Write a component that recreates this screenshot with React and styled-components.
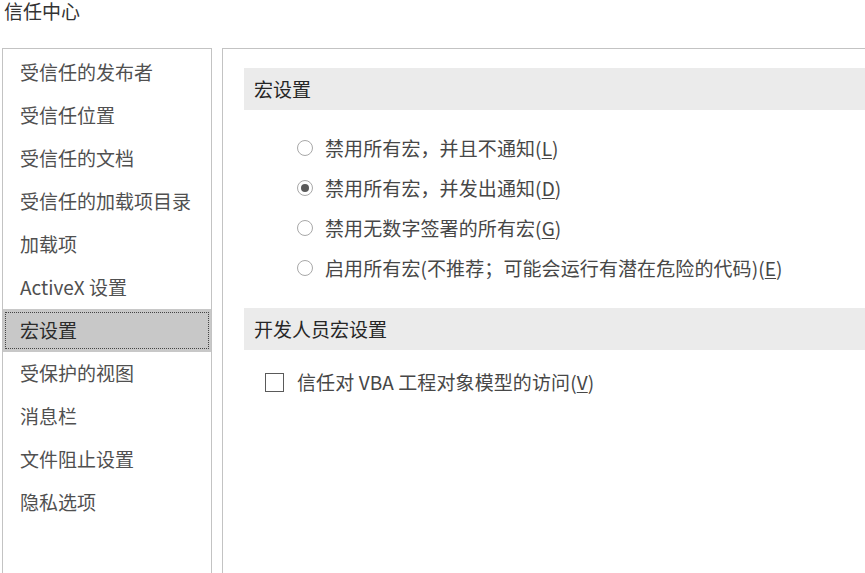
import React from "react";
import styled, { createGlobalStyle } from "styled-components";

const GlobalStyle = createGlobalStyle`
  html, body {
    margin: 0;
    padding: 0;
    background: #ffffff;
    overflow: hidden;
  }
  body {
    font-family: "Microsoft YaHei", "Noto Sans CJK SC", "Noto Sans", sans-serif;
    color: #444444;
  }
`;

const Page = styled.div`
  width: 865px;
  height: 573px;
  padding: 0 0 0 2px;
  box-sizing: border-box;
  overflow: hidden;
`;

const Title = styled.div`
  font-size: 19px;
  line-height: 22px;
  height: 22px;
  padding-left: 2px;
  color: #333333;
`;

const Body = styled.div`
  display: flex;
  gap: 10px;
  margin-top: 26px;
`;

const Sidebar = styled.ul`
  list-style: none;
  margin: 0;
  padding: 2px 0 0 0;
  width: 208px;
  height: 540px;
  flex: none;
  border: 1px solid #c3c3c3;
  border-bottom: none;
`;

const NavItem = styled.li`
  position: relative;
  height: 43px;
  box-sizing: border-box;
  display: flex;
  align-items: center;
  padding: 0 0 3px 17px;
  font-size: 19px;
  color: ${(p) => (p.$active ? "#2b2b2b" : "#505050")};
  background: ${(p) => (p.$active ? "#c8c8c8" : "transparent")};

  &::after {
    content: "";
    display: ${(p) => (p.$active ? "block" : "none")};
    position: absolute;
    left: 2px;
    right: 2px;
    top: 3px;
    bottom: 3px;
    border: 1px dotted #444444;
  }
`;

const Panel = styled.div`
  width: 700px;
  height: 540px;
  flex: none;
  padding: 19px 0 0 21px;
  box-sizing: border-box;
  border: 1px solid #c3c3c3;
  border-bottom: none;
`;

const SectionHeader = styled.div`
  height: 42px;
  box-sizing: border-box;
  display: flex;
  align-items: center;
  padding: 0 0 2px 10px;
  background: #ebebeb;
  font-size: 19px;
  color: #262626;
  margin-top: ${(p) => p.$top || 0}px;
`;

const OptionList = styled.div`
  display: flex;
  flex-direction: column;
  margin-top: 18px;
  padding-left: 53px;
`;

const OptionRow = styled.label`
  display: flex;
  align-items: center;
  gap: 12px;
  height: 40px;
  box-sizing: border-box;
  padding-bottom: 2px;
  font-size: 19px;
  letter-spacing: 0.1px;
  color: #474747;
`;

const Radio = styled.span`
  width: 16px;
  height: 16px;
  margin-top: 2px;
  border-radius: 50%;
  border: 1px solid #a8a8a8;
  box-sizing: border-box;
  display: flex;
  align-items: center;
  justify-content: center;
  flex: none;

  &::before {
    content: "";
    display: ${(p) => (p.$checked ? "block" : "none")};
    width: 8px;
    height: 8px;
    border-radius: 50%;
    background: #5a5a5a;
  }
`;

const CheckRow = styled(OptionRow)`
  margin-top: 12px;
  padding-left: 21px;
  gap: 13px;
`;

const Checkbox = styled.span`
  width: 19px;
  height: 19px;
  margin-top: 2px;
  box-sizing: border-box;
  border: 1px solid #5a5a5a;
  flex: none;
`;

const Key = styled.span`
  text-decoration: underline;
  text-underline-offset: 2px;
`;

const navItems = [
  "受信任的发布者",
  "受信任位置",
  "受信任的文档",
  "受信任的加载项目录",
  "加载项",
  "ActiveX 设置",
  "宏设置",
  "受保护的视图",
  "消息栏",
  "文件阻止设置",
  "隐私选项",
];

const options = [
  { text: "禁用所有宏，并且不通知", key: "L" },
  { text: "禁用所有宏，并发出通知", key: "D", checked: true },
  { text: "禁用无数字签署的所有宏", key: "G" },
  { text: "启用所有宏(不推荐；可能会运行有潜在危险的代码)", key: "E" },
];

export default function App() {
  return (
    <Page>
      <GlobalStyle />
      <Title>信任中心</Title>
      <Body>
        <Sidebar>
          {navItems.map((item) => (
            <NavItem key={item} $active={item === "宏设置"}>
              {item}
            </NavItem>
          ))}
        </Sidebar>
        <Panel>
          <SectionHeader>宏设置</SectionHeader>
          <OptionList>
            {options.map((o) => (
              <OptionRow key={o.key}>
                <Radio $checked={o.checked} />
                <span>
                  {o.text}(<Key>{o.key}</Key>)
                </span>
              </OptionRow>
            ))}
          </OptionList>
          <SectionHeader $top={20}>开发人员宏设置</SectionHeader>
          <CheckRow>
            <Checkbox />
            <span>
              信任对 VBA 工程对象模型的访问(<Key>V</Key>)
            </span>
          </CheckRow>
        </Panel>
      </Body>
    </Page>
  );
}
